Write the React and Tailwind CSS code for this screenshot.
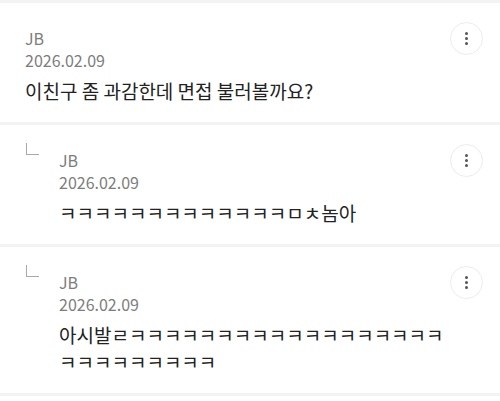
import React from 'react';

const comments = [
  { id: 1, name: 'JB', date: '2026.02.09', text: '이친구 좀 과감한데 면접 불러볼까요?', reply: false },
  { id: 2, name: 'JB', date: '2026.02.09', text: 'ㅋㅋㅋㅋㅋㅋㅋㅋㅋㅋㅋㅋㅋㅁㅊ놈아', reply: true },
  { id: 3, name: 'JB', date: '2026.02.09', text: '아시발ㄹㅋㅋㅋㅋㅋㅋㅋㅋㅋㅋㅋㅋㅋㅋㅋㅋㅋㅋㅋㅋㅋㅋㅋㅋㅋㅋㅋ', reply: true },
];

const KebabButton = () => (
  <button className="w-[33px] h-[33px] shrink-0 rounded-full border border-[#ececec] bg-white flex flex-col items-center justify-center gap-[2px] mt-[19px]">
    <span className="w-[3px] h-[3px] rounded-full bg-[#555]" />
    <span className="w-[3px] h-[3px] rounded-full bg-[#555]" />
    <span className="w-[3px] h-[3px] rounded-full bg-[#555]" />
  </button>
);

const ReplyMark = () => (
  <div className="w-[34px] shrink-0 pt-[18px]">
    <div className="w-[13px] h-[12px] ml-[1px] border-l border-b border-[#a8a8a8]" />
  </div>
);

const Comment = ({ c }) => (
  <div className="flex items-start pl-[25px] pr-[17px] bg-white">
    {c.reply && <ReplyMark />}
    <div className="flex-1 min-w-0 pt-[24px] pb-[18px]">
      <div className="text-[16px] leading-[22px] text-[#7d7d7d]">{c.name}</div>
      <div className="text-[16px] leading-[22px] text-[#7d7d7d]">{c.date}</div>
      <p className="mt-[6px] text-[19px] leading-[27px] text-[#222] break-all">{c.text}</p>
    </div>
    <KebabButton />
  </div>
);

export default function App() {
  return (
    <div className="w-[500px] h-[401px] overflow-hidden bg-white" style={{ fontFamily: '"Noto Sans CJK KR", "Noto Sans", sans-serif' }}>
      {comments.map((c) => (
        <div key={c.id}>
          <div className="h-[3px] bg-[#f3f3f3]" />
          <Comment c={c} />
        </div>
      ))}
      <div className="h-[3px] bg-[#f3f3f3]" />
    </div>
  );
}
